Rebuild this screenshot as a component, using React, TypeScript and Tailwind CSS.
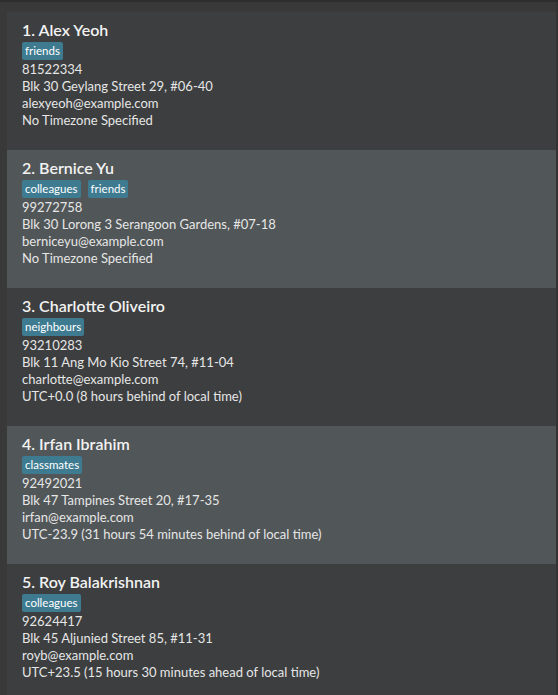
import React from 'react';

type Person = {
  name: string;
  tags: string[];
  phone: string;
  address: string;
  email: string;
  timezone: string;
};

const people: Person[] = [
  {
    name: 'Alex Yeoh',
    tags: ['friends'],
    phone: '81522334',
    address: 'Blk 30 Geylang Street 29, #06-40',
    email: 'alexyeoh@example.com',
    timezone: 'No Timezone Specified',
  },
  {
    name: 'Bernice Yu',
    tags: ['colleagues', 'friends'],
    phone: '99272758',
    address: 'Blk 30 Lorong 3 Serangoon Gardens, #07-18',
    email: 'berniceyu@example.com',
    timezone: 'No Timezone Specified',
  },
  {
    name: 'Charlotte Oliveiro',
    tags: ['neighbours'],
    phone: '93210283',
    address: 'Blk 11 Ang Mo Kio Street 74, #11-04',
    email: 'charlotte@example.com',
    timezone: 'UTC+0.0 (8 hours behind of local time)',
  },
  {
    name: 'Irfan Ibrahim',
    tags: ['classmates'],
    phone: '92492021',
    address: 'Blk 47 Tampines Street 20, #17-35',
    email: 'irfan@example.com',
    timezone: 'UTC-23.9 (31 hours 54 minutes behind of local time)',
  },
  {
    name: 'Roy Balakrishnan',
    tags: ['colleagues'],
    phone: '92624417',
    address: 'Blk 45 Aljunied Street 85, #11-31',
    email: 'royb@example.com',
    timezone: 'UTC+23.5 (15 hours 30 minutes ahead of local time)',
  },
];

const PersonCard: React.FC<{ person: Person; index: number }> = ({ person, index }) => (
  <div
    className={`h-[138px] shrink-0 pl-[15px] pt-[7px] ${
      index % 2 === 0 ? 'bg-[#3c3e3f]' : 'bg-[#515658]'
    }`}
  >
    <div className="text-[16px] leading-[22px] font-semibold text-[#f2f2f2]">
      {index + 1}. {person.name}
    </div>
    <div className="flex gap-[7px] mt-[1px] mb-[1px]">
      {person.tags.map((tag) => (
        <span
          key={tag}
          className="bg-[#3e7b91] text-white text-[11.5px] leading-[18px] px-[3px] rounded-[2px]"
        >
          {tag}
        </span>
      ))}
    </div>
    <div className="text-[13px] leading-[17px] text-[#e6e6e6]">
      <div>{person.phone}</div>
      <div>{person.address}</div>
      <div>{person.email}</div>
      <div>{person.timezone}</div>
    </div>
  </div>
);

const App: React.FC = () => {
  return (
    <div
      className="w-[558px] h-[695px] overflow-hidden bg-[#393939] border-t-2 border-[#2d2d2d] flex"
      style={{ fontFamily: '"Lato", "Open Sans", sans-serif' }}
    >
      <div className="flex-1 flex flex-col pt-[10px] pl-[7px]">
        {people.map((p, i) => (
          <PersonCard key={p.email} person={p} index={i} />
        ))}
      </div>
      <div className="w-[2px] bg-[#333333]" />
    </div>
  );
};

export default App;
